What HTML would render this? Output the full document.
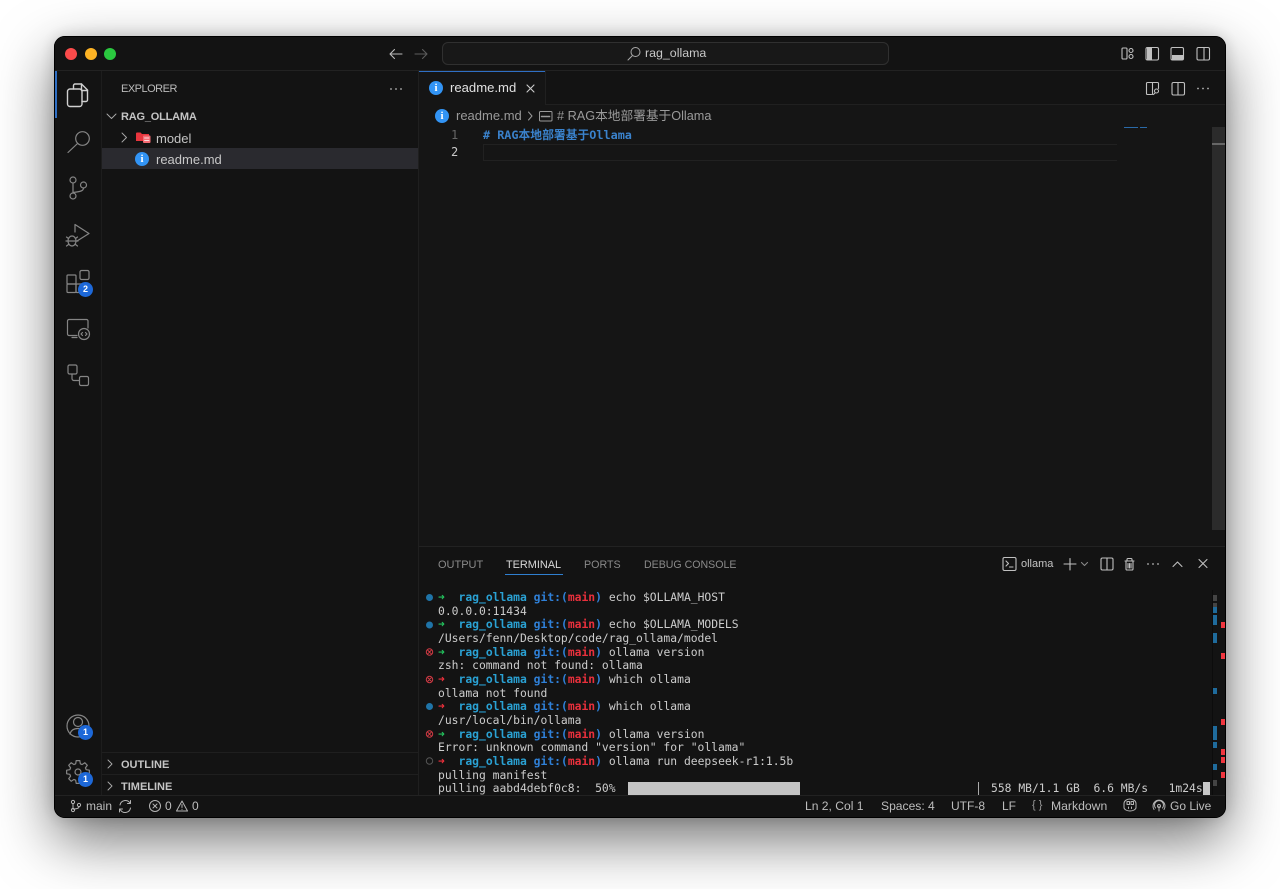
<!DOCTYPE html>
<html style="background:#fff"><head><meta charset="utf-8"><style>
html,body{margin:0;padding:0;width:1280px;height:889px;overflow:hidden}
body{position:relative;font-family:"Liberation Sans","Noto Sans CJK SC",sans-serif;color:#ccc;filter:blur(.3px)}
#w{position:absolute;left:54px;top:36px;width:1172px;height:782px;box-sizing:border-box;border-radius:11px;background:#131313;box-shadow:0 22px 58px rgba(0,0,0,.55),0 0 16px rgba(0,0,0,.16);}
#b{position:absolute;left:54px;top:36px;width:1172px;height:782px;box-sizing:border-box;border-radius:11px;border:1px solid #4a4a4a;outline:1px solid #000;outline-offset:-1px;pointer-events:none;z-index:9}
.r{position:absolute}
.t{position:absolute;white-space:pre;line-height:16px}
.m{position:absolute;left:438px;white-space:pre;font:11.35px/14px "DejaVu Sans Mono","Liberation Mono",monospace;color:#ccc}
.d{color:#2aa1d3;font-weight:bold}.g{color:#2f80d8;font-weight:bold}.e{color:#e8303c;font-weight:bold}.ag{color:#23c45e;font-weight:bold}.ar{color:#f0303c;font-weight:bold}
svg{position:absolute;left:0;top:0;z-index:5}
</style></head><body>
<div id="w"></div>
<!-- structure -->
<div class="r" style="left:55px;top:70px;width:1170px;height:1px;background:#222"></div>
<div class="r" style="left:101px;top:71px;width:1px;height:725px;background:#1d1d1d"></div>
<div class="r" style="left:418px;top:71px;width:1px;height:725px;background:#1f1f1f"></div>
<div class="r" style="left:55px;top:71px;width:2px;height:47px;background:#2f6fc4"></div>
<div class="r" style="left:102px;top:148px;width:316px;height:21px;background:#2a2a2f"></div>
<div class="r" style="left:102px;top:752px;width:316px;height:1px;background:#1f1f1f"></div>
<div class="r" style="left:102px;top:774px;width:316px;height:1px;background:#1f1f1f"></div>
<div class="r" style="left:55px;top:795px;width:1170px;height:1px;background:#222"></div>
<!-- tab -->
<div class="r" style="left:419px;top:71px;width:126px;height:34px;background:#151515;border-top:1px solid #2f6fc4;box-sizing:border-box"></div>
<div class="r" style="left:545px;top:71px;width:1px;height:34px;background:#202020"></div>
<div class="r" style="left:419px;top:105px;width:806px;height:441px;background:#151515"></div>
<div class="r" style="left:545px;top:104px;width:680px;height:1px;background:#202020"></div>
<div class="r" style="left:483px;top:144px;width:634px;height:17px;box-sizing:border-box;border:1px solid #212121;border-right:0"></div>
<div class="r" style="left:1212px;top:127px;width:13px;height:403px;background:#2b2b2b"></div>
<div class="r" style="left:1212px;top:143px;width:13px;height:2px;background:#666"></div>
<div class="r" style="left:1124px;top:127px;width:14px;height:1px;background:#2a6aa8"></div>
<div class="r" style="left:1140px;top:127px;width:7px;height:1px;background:#2a6aa8"></div>
<div class="r" style="left:419px;top:546px;width:806px;height:1px;background:#222"></div>
<div class="r" style="left:505px;top:574px;width:58px;height:1px;background:#2f7fd0"></div>
<!-- traffic lights -->
<div class="r" style="left:65px;top:48px;width:12px;height:12px;border-radius:50%;background:#fb4b4b"></div>
<div class="r" style="left:85px;top:48px;width:12px;height:12px;border-radius:50%;background:#fdb324"></div>
<div class="r" style="left:104px;top:48px;width:12px;height:12px;border-radius:50%;background:#2ac83f"></div>
<!-- search box -->
<div class="r" style="left:442px;top:42px;width:447px;height:23px;box-sizing:border-box;border:1px solid #303030;border-radius:6px;background:#181818"></div>
<div class="t" style="left:645px;top:45px;font-size:12.4px;color:#c8c8c8">rag_ollama</div>
<!-- sidebar text -->
<div class="t" style="left:121px;top:81px;font-size:11px;letter-spacing:-.5px;color:#bbb">EXPLORER</div>
<div class="t" style="left:121px;top:109px;font-size:11px;letter-spacing:-.2px;font-weight:bold;color:#c4c4c4">RAG_OLLAMA</div>
<div class="t" style="left:156px;top:131px;font-size:13px;color:#c4c4c4">model</div>
<div class="t" style="left:156px;top:152px;font-size:13px;color:#c8c8c8">readme.md</div>
<div class="t" style="left:121px;top:757px;font-size:11px;font-weight:bold;color:#c4c4c4">OUTLINE</div>
<div class="t" style="left:121px;top:779px;font-size:11px;font-weight:bold;color:#c4c4c4">TIMELINE</div>
<!-- tab + breadcrumb -->
<div class="t" style="left:450px;top:80px;font-size:13.1px;color:#e0e0e0">readme.md</div>
<div class="t" style="left:456px;top:108px;font-size:13px;color:#9a9a9a">readme.md</div>
<div class="t" style="left:557px;top:108px;font-size:12.7px;color:#9a9a9a;font-family:'Liberation Sans','Noto Sans CJK SC',sans-serif"># RAG本地部署基于Ollama</div>
<!-- editor -->
<div class="t" style="left:451px;top:127px;font:12px/16px 'DejaVu Sans Mono',monospace;color:#666">1</div>
<div class="t" style="left:451px;top:144px;font:12px/16px 'DejaVu Sans Mono',monospace;color:#c8c8c8">2</div>
<div class="t" style="left:483px;top:127px;font:bold 11.8px/16px 'DejaVu Sans Mono','Noto Sans CJK SC',monospace;color:#3a82cc"># RAG本地部署基于Ollama</div>
<!-- panel tabs -->
<div class="t" style="left:438px;top:557px;font-size:11px;color:#8a8a8a">OUTPUT</div>
<div class="t" style="left:506px;top:557px;font-size:10.9px;color:#d8d8d8">TERMINAL</div>
<div class="t" style="left:584px;top:557px;font-size:10.7px;color:#8a8a8a">PORTS</div>
<div class="t" style="left:644px;top:557px;font-size:10.6px;color:#8a8a8a">DEBUG CONSOLE</div>
<div class="t" style="left:1021px;top:556px;font-size:11px;color:#c4c4c4">ollama</div>
<!-- terminal -->
<div class="m" style="top:590px"><span class="ag">➜</span>  <span class="d">rag_ollama</span> <span class="g">git:(</span><span class="e">main</span><span class="g">)</span> echo $OLLAMA_HOST</div>
<div class="m" style="top:604px">0.0.0.0:11434</div>
<div class="m" style="top:617px"><span class="ag">➜</span>  <span class="d">rag_ollama</span> <span class="g">git:(</span><span class="e">main</span><span class="g">)</span> echo $OLLAMA_MODELS</div>
<div class="m" style="top:631px">/Users/fenn/Desktop/code/rag_ollama/model</div>
<div class="m" style="top:645px"><span class="ag">➜</span>  <span class="d">rag_ollama</span> <span class="g">git:(</span><span class="e">main</span><span class="g">)</span> ollama version</div>
<div class="m" style="top:658px">zsh: command not found: ollama</div>
<div class="m" style="top:672px"><span class="ar">➜</span>  <span class="d">rag_ollama</span> <span class="g">git:(</span><span class="e">main</span><span class="g">)</span> which ollama</div>
<div class="m" style="top:686px">ollama not found</div>
<div class="m" style="top:699px"><span class="ar">➜</span>  <span class="d">rag_ollama</span> <span class="g">git:(</span><span class="e">main</span><span class="g">)</span> which ollama</div>
<div class="m" style="top:713px">/usr/local/bin/ollama</div>
<div class="m" style="top:727px"><span class="ag">➜</span>  <span class="d">rag_ollama</span> <span class="g">git:(</span><span class="e">main</span><span class="g">)</span> ollama version</div>
<div class="m" style="top:740px">Error: unknown command "version" for "ollama"</div>
<div class="m" style="top:754px"><span class="ar">➜</span>  <span class="d">rag_ollama</span> <span class="g">git:(</span><span class="e">main</span><span class="g">)</span> ollama run deepseek-r1:1.5b</div>
<div class="m" style="top:768px">pulling manifest</div>
<div class="m" style="top:781px">pulling aabd4debf0c8:  50%</div>
<div class="r" style="left:628px;top:782px;width:172px;height:13px;background:#c4c4c4"></div>
<div class="r" style="left:978px;top:782px;width:1px;height:13px;background:#aaa"></div>
<div class="m" style="left:991px;top:781px">558 MB/1.1 GB  6.6 MB/s   1m24s</div>
<div class="r" style="left:1203px;top:782px;width:7px;height:13px;background:#c8c8c8"></div>
<!-- terminal overview ruler -->
<div class="r" style="left:1212px;top:590px;width:1px;height:205px;background:#0c0c0c"></div>
<div class="r" style="left:1213px;top:595px;width:4px;height:6px;background:#444"></div>
<div class="r" style="left:1213px;top:603px;width:4px;height:4px;background:#444"></div>
<div class="r" style="left:1213px;top:607px;width:4px;height:6px;background:#1f6b9c"></div>
<div class="r" style="left:1213px;top:615px;width:4px;height:10px;background:#1f6b9c"></div>
<div class="r" style="left:1213px;top:633px;width:4px;height:10px;background:#1f6b9c"></div>
<div class="r" style="left:1213px;top:688px;width:4px;height:6px;background:#1f6b9c"></div>
<div class="r" style="left:1213px;top:726px;width:4px;height:14px;background:#1f6b9c"></div>
<div class="r" style="left:1213px;top:742px;width:4px;height:6px;background:#1f6b9c"></div>
<div class="r" style="left:1213px;top:764px;width:4px;height:6px;background:#1f6b9c"></div>
<div class="r" style="left:1213px;top:780px;width:4px;height:6px;background:#444"></div>
<div class="r" style="left:1221px;top:622px;width:4px;height:6px;background:#f0363f"></div>
<div class="r" style="left:1221px;top:653px;width:4px;height:6px;background:#f0363f"></div>
<div class="r" style="left:1221px;top:719px;width:4px;height:6px;background:#f0363f"></div>
<div class="r" style="left:1221px;top:749px;width:4px;height:6px;background:#f0363f"></div>
<div class="r" style="left:1221px;top:757px;width:4px;height:6px;background:#f0363f"></div>
<div class="r" style="left:1221px;top:772px;width:4px;height:6px;background:#f0363f"></div>
<!-- status bar -->
<div class="t" style="left:86px;top:798px;font-size:12px;color:#bdbdbd">main</div>
<div class="t" style="left:165px;top:798px;font-size:12px;color:#bdbdbd">0</div>
<div class="t" style="left:192px;top:798px;font-size:12px;color:#bdbdbd">0</div>
<div class="t" style="left:805px;top:798px;font-size:12.1px;color:#bdbdbd">Ln 2, Col 1</div>
<div class="t" style="left:881px;top:798px;font-size:12.1px;color:#bdbdbd">Spaces: 4</div>
<div class="t" style="left:951px;top:798px;font-size:12px;color:#bdbdbd">UTF-8</div>
<div class="t" style="left:1002px;top:798px;font-size:12px;color:#bdbdbd">LF</div>
<div class="t" style="left:1032px;top:797px;font-size:11px;color:#999">{ }</div>
<div class="t" style="left:1051px;top:798px;font-size:12.2px;color:#bdbdbd">Markdown</div>
<div class="t" style="left:1170px;top:798px;font-size:12px;color:#bdbdbd">Go Live</div>
<!-- badges -->
<div class="r" style="z-index:6;left:78px;top:282px;width:15px;height:15px;border-radius:50%;background:#1d68d8;color:#fff;font:bold 9px/15px 'Liberation Sans',sans-serif;text-align:center">2</div>
<div class="r" style="z-index:6;left:78px;top:725px;width:15px;height:15px;border-radius:50%;background:#1d68d8;color:#fff;font:bold 9px/15px 'Liberation Sans',sans-serif;text-align:center">1</div>
<div class="r" style="z-index:6;left:78px;top:772px;width:15px;height:15px;border-radius:50%;background:#1d68d8;color:#fff;font:bold 9px/15px 'Liberation Sans',sans-serif;text-align:center">1</div>
<!-- info icons text -->
<div class="r" style="z-index:6;left:135px;top:152px;width:14px;height:14px;border-radius:50%;background:#3294f5;color:#fff;font:bold 11px/14px 'Liberation Serif',serif;text-align:center">i</div>
<div class="r" style="z-index:6;left:429px;top:81px;width:14px;height:14px;border-radius:50%;background:#3294f5;color:#fff;font:bold 11px/14px 'Liberation Serif',serif;text-align:center">i</div>
<div class="r" style="z-index:6;left:435px;top:109px;width:14px;height:14px;border-radius:50%;background:#3294f5;color:#fff;font:bold 11px/14px 'Liberation Serif',serif;text-align:center">i</div>
<svg width="1280" height="889" viewBox="0 0 1280 889" fill="none" stroke-linecap="round" stroke-linejoin="round">
<!-- nav arrows -->
<g stroke="#bbb" stroke-width="1.1"><path d="M390 54H402M390 54l4.5-4.5M390 54l4.500 4.500"/></g>
<g stroke="#5c5c5c" stroke-width="1.1"><path d="M427 54H415M427 54l-4.500-4.500M427 54l-4.500 4.500"/></g>
<!-- search in title -->
<g stroke="#aaa" stroke-width="1"><circle cx="635.500" cy="52" r="4.500"/><path d="M632 56l-4 4"/></g>
<!-- layout icons -->
<g stroke="#c0c0c0" stroke-width="1.1">
<rect x="1122" y="48" width="5" height="11" rx="1"/><circle cx="1131" cy="50.500" r="2"/><circle cx="1131" cy="56.500" r="2"/>
<rect x="1146" y="47.500" width="12.500" height="12.500" rx="1.500"/><rect x="1197" y="47.500" width="12.500" height="12.500" rx="1.500"/><path d="M1204 47.500V60"/>
<rect x="1171" y="47.500" width="12.500" height="12.500" rx="1.500"/>
<path d="M1153 82.500h-5.500a1 1 0 0 0-1 1v10a1 1 0 0 0 1 1h4M1153 82.500h4.500a1 1 0 0 1 1 1v5M1152.500 82.500V94.500"/><circle cx="1156.500" cy="91" r="2"/><path d="M1155 93l-1.500 1.500"/>
<rect x="1172" y="82.500" width="12.500" height="12.500" rx="1.500"/><path d="M1178 82.500V95"/>
<rect x="1101" y="558" width="12" height="12" rx="1.500"/><path d="M1107 558V570"/>
<rect x="1003" y="557.500" width="13" height="13" rx="1.500"/><path d="M1006 561l2.500 2.500-2.500 2.500M1009.500 567h3.500"/>
</g>
<rect x="1147" y="48" width="5" height="11.500" fill="#c0c0c0"/><rect x="1172" y="55" width="11" height="4.500" fill="#c0c0c0"/>
<!-- dots -->
<g fill="#b5b5b5"><circle cx="391" cy="89" r=".9"/><circle cx="396" cy="89" r=".9"/><circle cx="401" cy="89" r=".9"/><circle cx="1198" cy="88.500" r=".9"/><circle cx="1203" cy="88.500" r=".9"/><circle cx="1208" cy="88.500" r=".9"/><circle cx="1148" cy="564" r=".9"/><circle cx="1153" cy="564" r=".9"/><circle cx="1158" cy="564" r=".9"/></g>
<!-- tab close -->
<path d="M527 85l7 7M534 85l-7 7" stroke="#ccc" stroke-width="1.100"/>
<!-- breadcrumb -->
<path d="M528.500 112l3.500 4-3.500 4" stroke="#999" stroke-width="1"/>
<rect x="539.500" y="111.500" width="12.500" height="9.500" rx="1" stroke="#999" stroke-width="1"/><path d="M541.500 116.500h8.500" stroke="#999" stroke-width="1.500" stroke-dasharray="1.500 .7"/>
<!-- tree chevrons -->
<g stroke="#aaa" stroke-width=".9"><path d="M107 114l4.500 4.500 4.500-4.500M122 133l4.500 4.500-4.500 4.500M108 760l4 4-4 4M108 782l4 4-4 4"/></g>
<!-- model folder -->
<path d="M136 133.500a1 1 0 0 1 1-1h3.500l1.500 1.500h7v7h-13z" fill="#e8353d"/><rect x="143" y="135.500" width="7.500" height="7.500" rx="1" fill="#f56b73"/><path d="M144.500 138h4.500M144.500 140.500h4.500" stroke="#fff" stroke-width=".8"/>
<!-- activity bar -->
<g stroke="#d0d0d0" stroke-width="1.400">
<path d="M73.500 89V85.500a1.500 1.500 0 0 1 1.500-1.500h6.500l6 6v10a1.500 1.500 0 0 1-1.500 1.500H82"/><path d="M81.500 84v6.500h6"/><rect x="67.500" y="89" width="14.500" height="17.500" rx="2.500"/>
</g>
<g stroke="#858585" stroke-width="1.200">
<circle cx="82.500" cy="138.500" r="6.800"/><path d="M77.500 143.500L68 152.500"/>
<circle cx="73" cy="180" r="3"/><circle cx="73" cy="196" r="3"/><circle cx="83.500" cy="185" r="3"/><path d="M73 183V193M83.500 188c0 3-3 3.500-10.500 4.500"/>
<path d="M75 232V224.500L89 233.500l-12 7.500"/><ellipse cx="72" cy="241" rx="4" ry="5"/><path d="M68 241h8M66.500 237l2 1.500M77.500 237l-2 1.500M66 241h2M76 241h2M66.500 246l2-1.500M77.500 246l-2-1.500"/>
<rect x="67" y="275" width="9" height="9" rx="1"/><rect x="67" y="284" width="9" height="8.500" rx="1"/><rect x="76" y="284" width="8" height="8.500" rx="1"/><rect x="80" y="270.500" width="9" height="9" rx="1.500"/>
<path d="M77 335.500H69a1.500 1.500 0 0 1-1.500-1.500V321a1.500 1.500 0 0 1 1.500-1.500h17.500a1.500 1.500 0 0 1 1.500 1.500v7M72 337.500h5"/><circle cx="84" cy="334" r="5.500"/><path d="M82.500 332.500l-1.500 1.500 1.500 1.500M85.500 332.500l1.500 1.500-1.500 1.500"/>
<rect x="68" y="365" width="9" height="9" rx="1.500"/><rect x="79.500" y="376.500" width="9" height="9" rx="1.500"/><path d="M72 374v4.500a2 2 0 0 0 2 2h5.500"/>
<circle cx="78" cy="726" r="11"/><circle cx="78" cy="722" r="4.500"/><path d="M70 734c1-4 4-5.500 8-5.500s7 1.500 8 5.500"/>
<g transform="translate(78 772)"><path d="M11.36-1.80L11.36 1.80L8.17 2.34L7.43 4.12L9.30 6.76L6.76 9.30L4.12 7.43L2.34 8.17L1.80 11.36L-1.80 11.36L-2.34 8.17L-4.12 7.43L-6.76 9.30L-9.30 6.76L-7.43 4.12L-8.17 2.34L-11.36 1.80L-11.36 -1.80L-8.17 -2.34L-7.43 -4.12L-9.30 -6.76L-6.76 -9.30L-4.12 -7.43L-2.34 -8.17L-1.80 -11.36L1.80 -11.36L2.34 -8.17L4.12 -7.43L6.76 -9.30L9.30 -6.76L7.43 -4.12L8.17 -2.34Z"/><circle r="3"/></g>
</g>
<!-- panel icons -->
<g stroke="#c0c0c0" stroke-width="1.100">
<path d="M1070 558.500V570M1064 564h12"/>
<path d="M1081.500 562.500l3 3 3-3" stroke="#888"/>
<path d="M1125 561h9M1127 561v-1.500a1 1 0 0 1 1-1h3a1 1 0 0 1 1 1V561M1126 561v8a1 1 0 0 0 1 1h5a1 1 0 0 0 1-1v-8M1128 563.500v4.500M1129.500 563.500v4.500M1131 563.500v4.500"/>
<path d="M1173 566.500l4.500-4.500 4.500 4.500M1199 559.500l8 8M1207 559.500l-8 8"/>
</g>
<!-- terminal decorations -->
<g fill="#1f74a8"><circle cx="429.500" cy="597.500" r="3.500"/><circle cx="429.500" cy="625" r="3.500"/><circle cx="429.500" cy="706.500" r="3.500"/></g>
<g stroke="#d03a44" stroke-width="1"><circle cx="429.500" cy="652" r="3.200"/><path d="M428 650.500l3 3M431 650.500l-3 3"/><circle cx="429.500" cy="679.500" r="3.200"/><path d="M428 678l3 3M431 678l-3 3"/><circle cx="429.500" cy="734" r="3.200"/><path d="M428 732.500l3 3M431 732.500l-3 3"/></g>
<circle cx="429.500" cy="761" r="3.200" stroke="#555" stroke-width="1"/>
<!-- status icons -->
<g stroke="#b5b5b5" stroke-width="1">
<circle cx="73" cy="802" r="1.600"/><circle cx="73" cy="810" r="1.600"/><circle cx="79" cy="805" r="1.600"/><path d="M73 803.600V808.400M79 806.600c0 2-2.500 2-6 2.600"/>
<path d="M120 805a5.500 5.500 0 0 1 10-2M130.500 808a5.500 5.500 0 0 1-10 2M130.500 800.500v3h-3M119.500 812v-3h3"/>
<circle cx="155" cy="806" r="5.500"/><path d="M153 804l4 4M157 804l-4 4"/>
<path d="M182 801l5.500 10h-11zM182 804.500v3M182 809.200v.2"/>
<path d="M1124 803.500a6 4.500 0 0 1 12 0v4c0 2-3 3.500-6 3.500s-6-1.500-6-3.500z M1127 801.500h2.500v3h-2.500zM1131 801.500h2.500v3H1131zM1128.500 807v1.500M1131.500 807v1.500"/>
<circle cx="1159" cy="806" r="1.500"/><path d="M1159 807.500v4.500M1155.500 809a4.500 4.500 0 1 1 7 0M1154 810.500a6 6 0 1 1 10 0" transform="translate(0 -1)"/>
</g>
</svg>
<div id="b"></div>
</body></html>
